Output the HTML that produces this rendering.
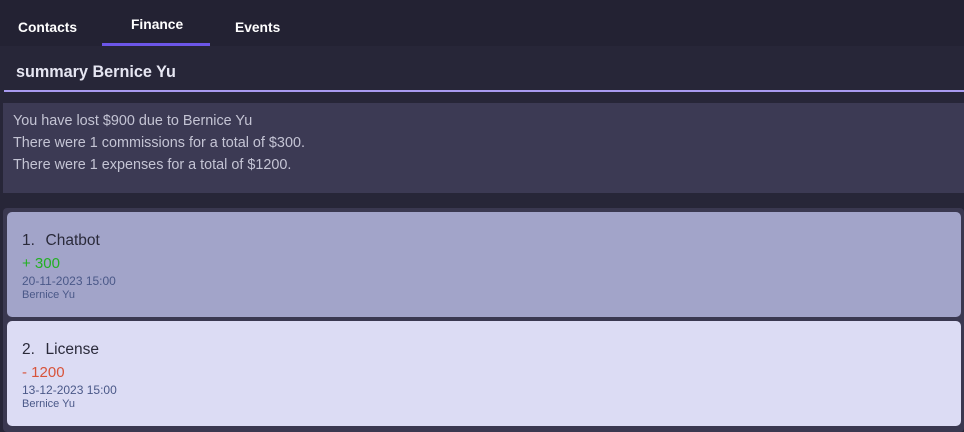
<!DOCTYPE html>
<html><head><meta charset="utf-8"><style>
*{margin:0;padding:0;box-sizing:border-box}
body{width:964px;height:432px;background:#272638;font-family:"Liberation Sans","DejaVu Sans",sans-serif;position:relative;overflow:hidden}
.tabs{position:absolute;left:0;top:0;width:964px;height:46px;background:#232233}
.tab{position:absolute;color:#fff;font-weight:bold;font-size:13.8px}
.ul{position:absolute;left:102px;top:43px;width:108px;height:3px;background:#6c56e8}
.cmd{position:absolute;left:16px;top:63px;color:#e6e6f2;font-weight:bold;font-size:16.2px}
.line{position:absolute;left:4px;top:90px;width:960px;height:2px;background:#a99bf0}
.res{position:absolute;left:3px;top:103px;width:961px;height:90px;background:#3c3a54;color:#c4c4d4;font-size:14.4px;padding:7px 10px;line-height:22px}
.list{position:absolute;left:3px;top:208px;width:961px;height:224px;background:#3a3850;border-radius:4px}
.card{position:absolute;left:7px;width:954px;height:105px;border-radius:5px;padding-left:15px}
.t{position:absolute;left:15px;top:20px;font-size:15.5px;color:#2a2a3a;word-spacing:1px}
.a{position:absolute;left:15px;top:43px;font-size:15px}
.d{position:absolute;left:15px;top:62px;font-size:12px;color:#4a5888}
.n{position:absolute;left:15px;top:77px;font-size:11px;color:#4a5888}
</style></head><body>
<div class="tabs">
<div class="tab" style="left:18px;top:20px">Contacts</div>
<div class="tab" style="left:131px;top:17px">Finance</div>
<div class="tab" style="left:235px;top:20px">Events</div>
<div class="ul"></div>
</div>
<div class="cmd">summary Bernice Yu</div>
<div class="line"></div>
<div class="res">You have lost $900 due to Bernice Yu<br>There were 1 commissions for a total of $300.<br>There were 1 expenses for a total of $1200.</div>
<div class="list"></div>
<div class="card" style="top:212px;background:#a2a4c9">
<div class="t">1.&nbsp; Chatbot</div><div class="a" style="color:#22b022">+ 300</div>
<div class="d">20-11-2023 15:00</div><div class="n">Bernice Yu</div></div>
<div class="card" style="top:321px;background:#dcdcf4">
<div class="t">2.&nbsp; License</div><div class="a" style="color:#d8533a">- 1200</div>
<div class="d">13-12-2023 15:00</div><div class="n">Bernice Yu</div></div>
</body></html>
